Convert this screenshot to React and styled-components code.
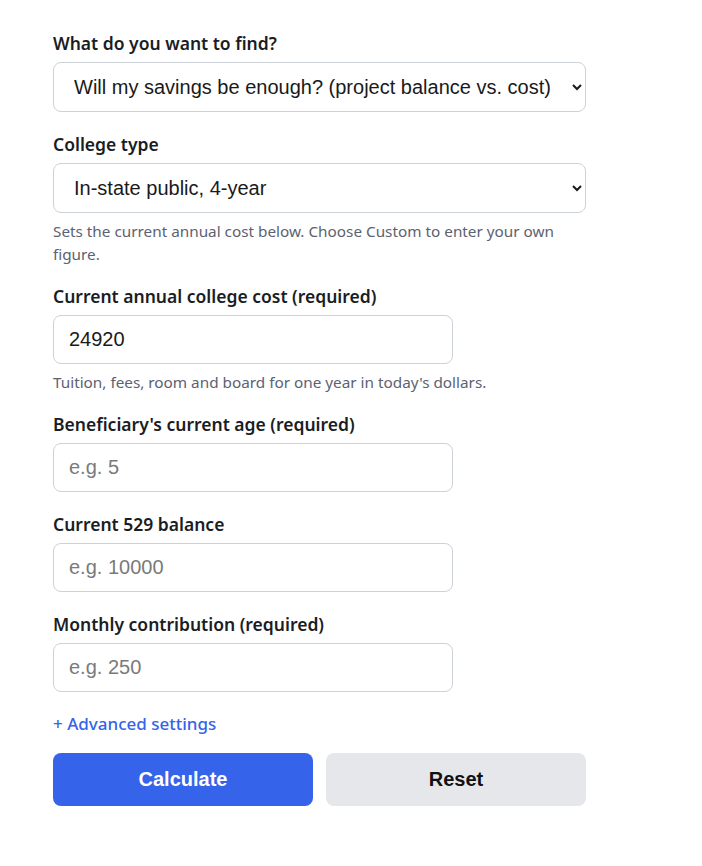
import React from "react";
import styled, { createGlobalStyle } from "styled-components";

const GlobalStyle = createGlobalStyle`
  html, body {
    margin: 0;
    padding: 0;
    background: #ffffff;
  }
  body {
    font-family: "Noto Sans", "Open Sans", Arial, sans-serif;
    color: #1a1d24;
  }
`;

const Form = styled.form`
  width: 533px;
  padding: 31px 0 40px 53px;
  display: flex;
  flex-direction: column;
`;

const Field = styled.div`
  display: flex;
  flex-direction: column;
  margin-bottom: ${(p) => (p.$withHint ? "18px" : "20px")};
`;

const Label = styled.label`
  font-family: "Noto Sans", sans-serif;
  font-size: 17.5px;
  font-weight: 600;
  line-height: 25px;
  color: #1a1d24;
  margin-bottom: 6px;
`;

const Select = styled.select`
  width: 533px;
  height: 50px;
  padding: 0 12px 0 16px;
  border: 1px solid #cdd1d8;
  border-radius: 8px;
  background: #ffffff;
  font-family: "Liberation Sans", Arial, sans-serif;
  font-size: 20px;
  color: #1a1a1a;
  box-sizing: border-box;
`;

const Input = styled.input`
  width: 400px;
  height: 49px;
  padding: 0 15px;
  border: 1px solid #cdd1d8;
  border-radius: 8px;
  background: #ffffff;
  font-family: "Liberation Sans", Arial, sans-serif;
  font-size: 20px;
  color: #1a1a1a;
  box-sizing: border-box;

  &::placeholder {
    color: #7a7a7a;
  }
`;

const Hint = styled.p`
  margin: 7px 0 0;
  font-family: "Noto Sans", sans-serif;
  font-size: 15.3px;
  line-height: 23px;
  color: #5c6270;
`;

const AdvancedLink = styled.button`
  align-self: flex-start;
  margin: -1px 0 17px;
  padding: 0;
  border: none;
  background: none;
  font-family: "Noto Sans", sans-serif;
  font-size: 17px;
  font-weight: 500;
  line-height: 25px;
  color: #3563e9;
  cursor: pointer;
`;

const ButtonRow = styled.div`
  display: grid;
  grid-template-columns: 1fr 1fr;
  gap: 13px;
`;

const Button = styled.button`
  height: 53px;
  border: none;
  border-radius: 8px;
  font-family: "Liberation Sans", Arial, sans-serif;
  font-size: 20px;
  font-weight: 700;
  cursor: pointer;
  background: ${(p) => (p.$primary ? "#3563e9" : "#e5e7eb")};
  color: ${(p) => (p.$primary ? "#ffffff" : "#111111")};
`;

export default function App() {
  return (
    <>
      <GlobalStyle />
      <Form onSubmit={(e) => e.preventDefault()}>
        <Field>
          <Label htmlFor="goal">What do you want to find?</Label>
          <Select id="goal" defaultValue="enough">
            <option value="enough">
              Will my savings be enough? (project balance vs. cost)
            </option>
            <option value="monthly">How much should I save each month?</option>
          </Select>
        </Field>

        <Field $withHint>
          <Label htmlFor="type">College type</Label>
          <Select id="type" defaultValue="instate">
            <option value="instate">In-state public, 4-year</option>
            <option value="outstate">Out-of-state public, 4-year</option>
            <option value="private">Private nonprofit, 4-year</option>
            <option value="custom">Custom</option>
          </Select>
          <Hint>
            Sets the current annual cost below. Choose Custom to enter your own
            figure.
          </Hint>
        </Field>

        <Field $withHint>
          <Label htmlFor="cost">Current annual college cost (required)</Label>
          <Input id="cost" type="text" defaultValue="24920" />
          <Hint>Tuition, fees, room and board for one year in today's dollars.</Hint>
        </Field>

        <Field>
          <Label htmlFor="age">Beneficiary's current age (required)</Label>
          <Input id="age" type="text" placeholder="e.g. 5" />
        </Field>

        <Field>
          <Label htmlFor="balance">Current 529 balance</Label>
          <Input id="balance" type="text" placeholder="e.g. 10000" />
        </Field>

        <Field>
          <Label htmlFor="monthly">Monthly contribution (required)</Label>
          <Input id="monthly" type="text" placeholder="e.g. 250" />
        </Field>

        <AdvancedLink type="button">+ Advanced settings</AdvancedLink>

        <ButtonRow>
          <Button type="submit" $primary>
            Calculate
          </Button>
          <Button type="reset">Reset</Button>
        </ButtonRow>
      </Form>
    </>
  );
}
